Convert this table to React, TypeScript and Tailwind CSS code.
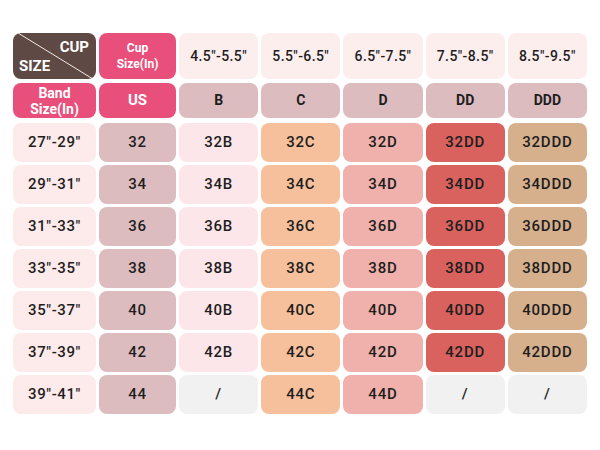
const cups = [
  { range: '4.5"-5.5"', cup: "B", bg: "bg-[#fde6ea]" },
  { range: '5.5"-6.5"', cup: "C", bg: "bg-[#f6c09c]" },
  { range: '6.5"-7.5"', cup: "D", bg: "bg-[#f0b0ab]" },
  { range: '7.5"-8.5"', cup: "DD", bg: "bg-[#d9625f]" },
  { range: '8.5"-9.5"', cup: "DDD", bg: "bg-[#d6af8d]" },
];

const bands = [
  { range: '27"-29"', us: 32 },
  { range: '29"-31"', us: 34 },
  { range: '31"-33"', us: 36 },
  { range: '33"-35"', us: 38 },
  { range: '35"-37"', us: 40 },
  { range: '37"-39"', us: 42 },
  { range: '39"-41"', us: 44 },
];

// sizes that don't exist for the 44 band
const missing = new Set(["44B", "44DD", "44DDD"]);

const cell = "flex items-center justify-center rounded-lg text-center";

export default function App() {
  return (
    <div className="w-[600px] h-[450px] bg-white font-['Roboto',sans-serif] text-[#1e1e1e]">
      <div className="ml-[13px] pt-[33px] w-[574px] grid grid-cols-[83px_77px_repeat(5,1fr)] gap-x-[3px]">
        {/* header row 1 */}
        <div className={`${cell} relative h-[46px] bg-[#5e4944] text-white font-bold text-[15px]`}>
          <svg className="absolute inset-0" width="83" height="46" viewBox="0 0 83 46">
            <line x1="5" y1="0" x2="80" y2="46" stroke="#f4ece8" strokeWidth="1" />
          </svg>
          <span className="absolute right-[7px] top-[3px]">CUP</span>
          <span className="absolute left-[6px] bottom-[2px]">SIZE</span>
        </div>
        <div className={`${cell} h-[46px] bg-[#e84f7b] text-white font-bold text-[12px] leading-[16px]`}>
          Cup
          <br />
          Size(In)
        </div>
        {cups.map((c) => (
          <div key={c.range} className={`${cell} h-[46px] bg-[#fdeeee] text-[14px] font-medium tracking-[0.4px]`}>
            {c.range}
          </div>
        ))}

        {/* header row 2 */}
        <div className={`${cell} mt-[4px] h-[35px] bg-[#e84f7b] text-white font-bold text-[14px] leading-[16px]`}>
          Band
          <br />
          Size(In)
        </div>
        <div className={`${cell} mt-[4px] h-[35px] bg-[#e84f7b] text-white font-bold text-[15px]`}>US</div>
        {cups.map((c) => (
          <div key={c.cup} className={`${cell} mt-[4px] h-[35px] bg-[#dcbcbe] font-bold text-[14px]`}>
            {c.cup}
          </div>
        ))}
      </div>

      <div className="ml-[13px] mt-[5px] w-[574px] grid grid-cols-[83px_77px_repeat(5,1fr)] gap-x-[3px] gap-y-[3px]">
        {bands.map((b) => (
          <>
            <div key={b.range} className={`${cell} h-[39px] bg-[#fdeaea] text-[15px] font-medium tracking-[0.6px]`}>
              {b.range}
            </div>
            <div key={`us${b.us}`} className={`${cell} h-[39px] bg-[#dcbcbe] text-[15px] font-medium tracking-[0.8px]`}>
              {b.us}
            </div>
            {cups.map((c) => {
              const size = `${b.us}${c.cup}`;
              const none = missing.has(size);
              return (
                <div
                  key={size}
                  className={`${cell} h-[39px] text-[15px] font-medium tracking-[0.8px] ${none ? "bg-[#f1f1f1]" : c.bg}`}
                >
                  {none ? "/" : size}
                </div>
              );
            })}
          </>
        ))}
      </div>
    </div>
  );
}
